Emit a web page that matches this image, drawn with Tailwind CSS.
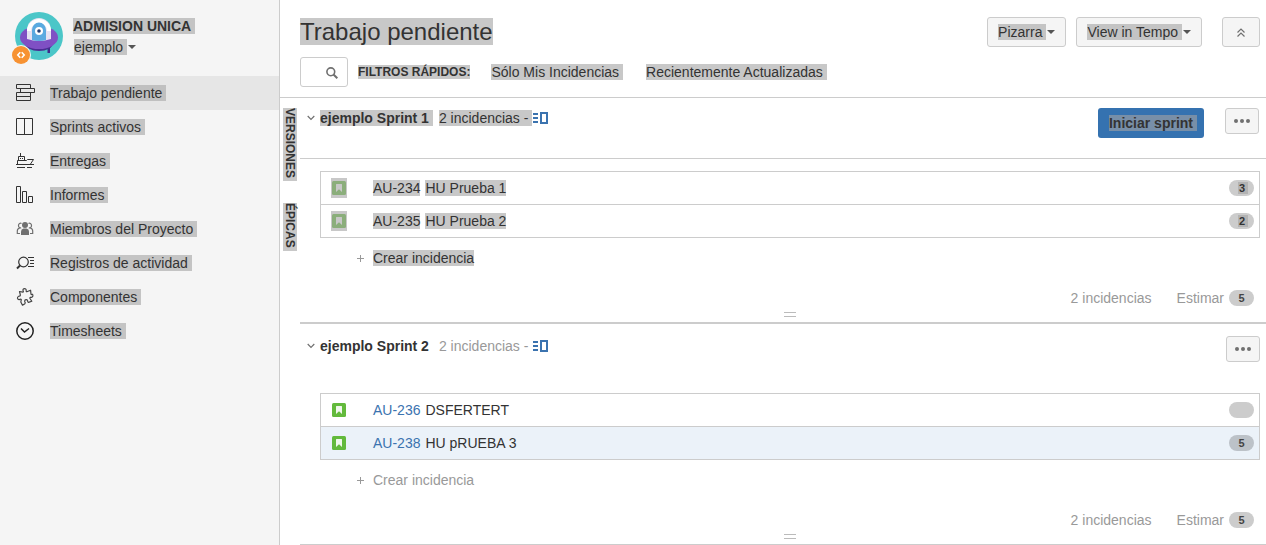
<!DOCTYPE html>
<html lang="es">

<head>
    <meta charset="UTF-8">
    <meta name="viewport" content="width=device-width, initial-scale=1.0">
    <title>Trabajo pendiente - ADMISION UNICA</title>
    <script src="https://cdn.jsdelivr.net/npm/@tailwindcss/browser@4"></script>
</head>

<body class="flex min-h-screen bg-white font-['Liberation_Sans',Arial,sans-serif] text-[14px] leading-4 text-[#333]">

    <!-- Shared icons -->
    <svg class="hidden">
        <symbol id="icon-caret" viewBox="0 0 8 4">
            <path d="M0 0h8L4 4z" fill="#555" />
        </symbol>
        <symbol id="icon-chevron" viewBox="0 0 8 6">
            <path d="M.7 1L4 4.3 7.3 1" fill="none" stroke="#707070" stroke-width="1.2" />
        </symbol>
        <symbol id="icon-panel" viewBox="0 0 15 12">
            <path d="M0 1h5v2H0zM0 5h5v2H0zM0 9h5v2H0z" fill="#3b73af" />
            <path d="M8 1h6v10H8z" fill="none" stroke="#3b73af" stroke-width="2" />
        </symbol>
        <symbol id="icon-dots" viewBox="0 0 16 4">
            <circle cx="2" cy="2" r="2" fill="#707070" />
            <circle cx="8" cy="2" r="2" fill="#707070" />
            <circle cx="14" cy="2" r="2" fill="#707070" />
        </symbol>
        <symbol id="icon-story" viewBox="0 0 14 14">
            <rect width="14" height="14" rx="1.5" fill="currentColor" />
            <path d="M4 3.500q0-.5.5-.5h5q.5 0 .5.500V11L7 8.200 4 11z" fill="#fff" fill-opacity=".9" />
        </symbol>
        <symbol id="icon-story-selected" viewBox="0 0 14 14">
            <rect width="14" height="14" rx="1.5" fill="#8bae7b" />
            <path d="M4 3.500q0-.5.5-.5h5q.5 0 .5.500V11L7 8.200 4 11z" fill="#c8c8c8" />
        </symbol>
        <symbol id="icon-plus" viewBox="0 0 7 7">
            <path d="M3.500 0v7M0 3.500h7" stroke="#999" fill="none" />
        </symbol>
    </svg>

    <aside class="w-[280px] shrink-0 border-r border-[#ccc] bg-[#f5f5f5]">
        <div class="flex h-[76px] pt-3 pl-[15px]">
            <div class="relative size-12 shrink-0">
                <svg class="size-12" viewBox="0 0 48 48">
                    <circle cx="24" cy="24" r="24" fill="#4bc6c8" />
                    <path d="M31 34h4v7h-2.500v-4H31z" fill="#3f2a8c" />
                    <ellipse cx="24" cy="31" rx="14" ry="8" fill="#4a2d93" />
                    <ellipse cx="24" cy="25.500" rx="19" ry="11.500" fill="#7f50c4" />
                    <path d="M12 27V18a12 12 0 0 1 24 0v9q-12 4-24 0z" fill="#e6e2f2" />
                    <path d="M12 19a12 12 0 0 1 24 0h-4a8 8 0 0 0-16 0z" fill="#fff" />
                    <path d="M17 28V18a7 7.500 0 0 1 14 0v10q-7 2-14 0z" fill="#5aaae0" />
                    <circle cx="24" cy="19" r="4" fill="#fff" />
                    <circle cx="24" cy="19" r="1.800" fill="#223f73" />
                </svg>
                <svg class="absolute top-[33px] -left-1 size-5" viewBox="0 0 20 20">
                    <circle cx="10" cy="10" r="10" fill="#f5f5f5" />
                    <circle cx="10" cy="10" r="9" fill="#f79232" />
                    <path d="M9.300 7.300L6.800 10 9.300 12.700M10.700 7.300L13.200 10 10.700 12.700" fill="none" stroke="#fff" stroke-width="1.600" />
                </svg>
            </div>
            <div class="pt-[6px] pl-[10px]">
                <div class="mb-[5px]"><a href="#" class="inline-block bg-[#c4c4c4] pr-1 font-bold">ADMISION UNICA</a></div>
                <button class="flex items-center gap-px pl-px"><span class="bg-[#c4c4c4] pr-1">ejemplo</span><svg class="h-1 w-2"><use href="#icon-caret" /></svg></button>
            </div>
        </div>

        <nav>
            <a href="#" class="flex h-[34px] items-center gap-[14px] bg-[#e6e6e6] pl-4">
                <svg class="size-5" viewBox="0 0 20 20" fill="none" stroke="#333">
                    <path d="M.5 1.500h14v4H.5zM4.500 5.500h14v4h-14zM.5 9.500h14v8H.5zM.5 13.500h14" />
                </svg>
                <span class="bg-[#c0c0c0] pr-1">Trabajo pendiente</span>
            </a>
            <a href="#" class="flex h-[34px] items-center gap-[14px] pl-4">
                <svg class="size-5" viewBox="0 0 20 20" fill="none" stroke="#333">
                    <path d="M.5 1.500h16v16H.5zM8.500 1.500v16" />
                </svg>
                <span class="bg-[#c4c4c4] pr-1">Sprints activos</span>
            </a>
            <a href="#" class="flex h-[34px] items-center gap-[14px] pl-4">
                <svg class="size-5" viewBox="0 0 20 20" fill="none" stroke="#333">
                    <path d="M4.500 2v3M2.500 9V5.500h6V9M1.500 13V9.500h9l1-1h6L14.500 13M0 13.500h18M1 16.500h8M11 16.500h5M4 7.500h1M6 7.500h1" />
                </svg>
                <span class="bg-[#c4c4c4] pr-1">Entregas</span>
            </a>
            <a href="#" class="flex h-[34px] items-center gap-[14px] pl-4">
                <svg class="size-5" viewBox="0 0 20 20" fill="none" stroke="#333">
                    <path d="M.5 1.500h4v16h-4zM6.500 6.500h4v11h-4zM12.500 11.500h4v6h-4z" />
                </svg>
                <span class="bg-[#c4c4c4] pr-1">Informes</span>
            </a>
            <a href="#" class="flex h-[34px] items-center gap-[14px] pl-4">
                <svg class="size-5" viewBox="0 0 20 20" fill="none" stroke="#707070">
                    <circle cx="9" cy="6" r="3" fill="#707070" stroke="none" />
                    <path d="M5 16v-3.500q0-2.500 2.500-3h3q2.500.5 2.500 3V16z" fill="#707070" stroke="none" />
                    <path d="M5.500 4.500a2 2.400 0 1 0-.3 4.300M12.500 4.500a2 2.400 0 1 1 .3 4.300M3.500 9.200Q1.300 9.700 1.300 12v2.500H4M14.500 9.200q2.200.5 2.200 2.800v2.500H14" stroke-width="1.200" />
                </svg>
                <span class="bg-[#c4c4c4] pr-1">Miembros del Proyecto</span>
            </a>
            <a href="#" class="flex h-[34px] items-center gap-[14px] pl-4">
                <svg class="size-5" viewBox="0 0 20 20" fill="none" stroke="#333">
                    <circle cx="7.500" cy="9" r="4.800" stroke-width="1.200" />
                    <path d="M4 12.500L1 15.500" stroke-width="2" />
                    <path d="M12 4.500h6M14 7.500h4M14 10.500h4M12 13.500h6" />
                </svg>
                <span class="bg-[#c4c4c4] pr-1">Registros de actividad</span>
            </a>
            <a href="#" class="flex h-[34px] items-center gap-[14px] pl-4">
                <svg class="size-5" viewBox="0 0 20 20" fill="none" stroke="#444" stroke-width="1.200">
                    <path d="M3.500 4.500L7 5.200Q7.800 4.500 7 3.500 6.800 1.700 8.500 1.700 10.300 1.700 10.200 3.400 9.800 4.500 10.800 4.800L14.600 3.200 15 7.200Q15.500 8 16.300 7.200 17.300 7.600 16.800 9.300 16.200 10.800 14.600 10.200 13.600 10.500 14 11.500L15.800 14.300 12.500 15.400Q11.400 15 11.700 14 11.500 12.500 10 12.700 8.400 13 8.700 14.600 9.700 15.800 8.900 16.700L6.500 18.200 4.800 15 5.300 12.600Q4.800 11.800 3.800 12.400 2.200 13 1.500 11.500 1.100 9.800 2.800 9.200 4.200 9.300 4.400 8.200z" stroke-linejoin="round" />
                </svg>
                <span class="bg-[#c4c4c4] pr-1">Componentes</span>
            </a>
            <a href="#" class="flex h-[34px] items-center gap-[14px] pl-4">
                <svg class="size-5" viewBox="0 0 20 20" fill="none" stroke="#222" stroke-width="1.500">
                    <circle cx="9" cy="10" r="8.200" />
                    <path d="M5 7.500L8.500 11 13 7.500" />
                </svg>
                <span class="bg-[#c4c4c4] pr-1">Timesheets</span>
            </a>
        </nav>
    </aside>

    <main class="min-w-0 flex-1">
        <header class="border-b border-[#ccc] pr-[6px] pb-[10px] pl-5">
            <div class="flex items-start justify-between">
                <h1 class="mt-[18px] bg-[#c8c8c8] text-[24px] leading-[27px]">Trabajo pendiente</h1>
                <div class="mt-[17px] flex gap-[10px]">
                    <button class="flex h-[30px] items-center gap-px rounded-[3px] border border-[#ccc] bg-[#f5f5f5] px-[10px]"><span class="bg-[#c4c4c4] pr-1">Pizarra</span><svg class="h-1 w-2"><use href="#icon-caret" /></svg></button>
                    <button class="flex h-[30px] items-center gap-px rounded-[3px] border border-[#ccc] bg-[#f5f5f5] px-[10px]"><span class="bg-[#c4c4c4] pr-1">View in Tempo</span><svg class="h-1 w-2"><use href="#icon-caret" /></svg></button>
                    <button class="ml-[10px] flex h-[30px] w-[38px] items-center justify-center rounded-[3px] border border-[#ccc] bg-[#f5f5f5]" aria-label="Contraer">
                        <svg class="h-[9px] w-2" viewBox="0 0 8 9" fill="none" stroke="#707070" stroke-width="1.200">
                            <path d="M.5 4.500L4 1l3.500 3.500M.5 8.500L4 5l3.500 3.500" />
                        </svg>
                    </button>
                </div>
            </div>
            <div class="mt-[10px] flex items-center">
                <label class="relative block">
                    <input type="text" aria-label="Buscar" class="block h-[30px] w-12 rounded-[3px] border border-[#ccc] bg-white pr-6 pl-1">
                    <svg class="absolute top-[10px] left-[26px] size-3" viewBox="0 0 12 12" fill="none" stroke="#707070">
                        <circle cx="4.800" cy="4.800" r="3.900" stroke-width="1.600" />
                        <path d="M7.500 7.500L11.300 11.300" stroke-width="2" />
                    </svg>
                </label>
                <span class="ml-[10px] bg-[#c8c8c8] text-[12px] leading-[14px] font-bold">FILTROS RÁPIDOS:</span>
                <a href="#" class="ml-[21px] bg-[#c8c8c8] pr-1">Sólo Mis Incidencias</a>
                <a href="#" class="ml-[23px] bg-[#c8c8c8] pr-1">Recientemente Actualizadas</a>
            </div>
        </header>

        <div class="flex">
            <div class="flex w-5 shrink-0 flex-col gap-[22px] pt-[10px] pl-[3px] text-[12px] leading-[14px] font-bold">
                <button class="w-[14px] bg-[#c8c8c8] pb-[3px] [writing-mode:vertical-rl]">VERSIONES</button>
                <button class="w-[14px] bg-[#c8c8c8] pb-[3px] [writing-mode:vertical-rl]">ÉPICAS</button>
            </div>

            <div class="min-w-0 flex-1">
                <!-- Sprint 1 -->
                <section class="border-b-2 border-[#ccc]">
                    <div class="flex items-start border-b border-[#ccc] pt-[10px] pr-[7px] pb-5 pl-[7px]">
                        <div class="mt-[2px] flex items-center">
                            <svg class="mr-[5px] h-[6px] w-2"><use href="#icon-chevron" /></svg>
                            <h2 class="bg-[#c8c8c8] pr-1 font-bold">ejemplo Sprint 1</h2>
                            <span class="ml-[6px] bg-[#c8c8c8] pr-1">2 incidencias -</span>
                            <svg class="ml-px h-3 w-[15px]"><use href="#icon-panel" /></svg>
                        </div>
                        <button class="ml-auto flex h-[30px] items-center rounded-[3px] bg-[#3572b0] pr-[7px] pl-[11px] font-bold"><span class="bg-[#788fa8] pr-1">Iniciar sprint</span></button>
                        <button class="ml-[21px] flex h-[26px] w-[34px] items-center justify-center rounded-[3px] border border-[#ccc] bg-[#f5f5f5]" aria-label="Más acciones"><svg class="h-1 w-4"><use href="#icon-dots" /></svg></button>
                    </div>

                    <ul class="mt-3 mr-[6px] ml-5 divide-y divide-[#ccc] border border-[#ccc]">
                        <li class="box-content flex h-8 items-center pr-[5px] pl-[10px]">
                            <span class="mr-[26px] flex h-5 w-4 items-center justify-center bg-[#c8c8c8]"><svg class="size-[14px]"><use href="#icon-story-selected" /></svg></span>
                            <a href="#" class="mr-[5px] bg-[#c8c8c8]">AU-234</a>
                            <span class="bg-[#c8c8c8]">HU Prueba 1</span>
                            <span class="ml-auto flex h-4 w-[25px] items-center rounded-full bg-[#ccc] pl-[9px] text-[11px] leading-3 font-bold"><span class="bg-[#b3b3b3] pr-[3px] pl-px">3</span></span>
                        </li>
                        <li class="box-content flex h-8 items-center pr-[5px] pl-[10px]">
                            <span class="mr-[26px] flex h-5 w-4 items-center justify-center bg-[#c8c8c8]"><svg class="size-[14px]"><use href="#icon-story-selected" /></svg></span>
                            <a href="#" class="mr-[5px] bg-[#c8c8c8]">AU-235</a>
                            <span class="bg-[#c8c8c8]">HU Prueba 2</span>
                            <span class="ml-auto flex h-4 w-[25px] items-center rounded-full bg-[#ccc] pl-[9px] text-[11px] leading-3 font-bold"><span class="bg-[#b3b3b3] pr-[3px] pl-px">2</span></span>
                        </li>
                    </ul>

                    <button class="mt-3 ml-[57px] flex items-center gap-[9px]">
                        <svg class="size-[7px]"><use href="#icon-plus" /></svg>
                        <span class="bg-[#c8c8c8]">Crear incidencia</span>
                    </button>

                    <div class="mt-6 mr-3 flex items-center justify-end text-[#999]">
                        <span class="mr-[25px]">2 incidencias</span>
                        <span class="mr-[5px]">Estimar</span>
                        <span class="flex h-4 w-[25px] items-center justify-center rounded-full bg-[#ccc] text-[11px] font-bold text-[#444]">5</span>
                    </div>
                    <div class="mt-[6px] mr-[6px] mb-[5px] ml-5 flex justify-center">
                        <div class="h-[5px] w-3 border-y border-[#bbb]"></div>
                    </div>
                </section>

                <!-- Sprint 2 -->
                <section class="border-b border-[#ccc]">
                    <div class="flex items-start pt-3 pr-[6px] pb-[19px] pl-[7px]">
                        <div class="mt-[2px] flex items-center">
                            <svg class="mr-[5px] h-[6px] w-2"><use href="#icon-chevron" /></svg>
                            <h2 class="pr-1 font-bold">ejemplo Sprint 2</h2>
                            <span class="ml-[6px] pr-1 text-[#999]">2 incidencias -</span>
                            <svg class="ml-px h-3 w-[15px]"><use href="#icon-panel" /></svg>
                        </div>
                        <button class="ml-auto flex h-[26px] w-[34px] items-center justify-center rounded-[3px] border border-[#ccc] bg-[#f5f5f5]" aria-label="Más acciones"><svg class="h-1 w-4"><use href="#icon-dots" /></svg></button>
                    </div>

                    <ul class="mt-3 mr-[6px] ml-5 divide-y divide-[#ccc] border border-[#ccc]">
                        <li class="box-content flex h-8 items-center pr-[5px] pl-[10px]">
                            <span class="mr-[26px] flex h-5 w-4 items-center justify-center text-[#63ba3c]"><svg class="size-[14px]"><use href="#icon-story" /></svg></span>
                            <a href="#" class="mr-[5px] text-[#3b73af]">AU-236</a>
                            <span>DSFERTERT</span>
                            <span class="ml-auto h-4 w-[25px] rounded-full bg-[#ccc]"></span>
                        </li>
                        <li class="box-content flex h-8 items-center bg-[#ebf2f9] pr-[5px] pl-[10px]">
                            <span class="mr-[26px] flex h-5 w-4 items-center justify-center text-[#63ba3c]"><svg class="size-[14px]"><use href="#icon-story" /></svg></span>
                            <a href="#" class="mr-[5px] text-[#3b73af]">AU-238</a>
                            <span>HU pRUEBA 3</span>
                            <span class="ml-auto flex h-4 w-[25px] items-center justify-center rounded-full bg-[#bcc2c8] text-[11px] font-bold text-[#444]">5</span>
                        </li>
                    </ul>

                    <button class="mt-3 ml-[57px] flex items-center gap-[9px] text-[#999]">
                        <svg class="size-[7px]"><use href="#icon-plus" /></svg>
                        <span>Crear incidencia</span>
                    </button>

                    <div class="mt-6 mr-3 flex items-center justify-end text-[#999]">
                        <span class="mr-[25px]">2 incidencias</span>
                        <span class="mr-[5px]">Estimar</span>
                        <span class="flex h-4 w-[25px] items-center justify-center rounded-full bg-[#ccc] text-[11px] font-bold text-[#444]">5</span>
                    </div>
                    <div class="mt-[6px] mr-[6px] mb-[5px] ml-5 flex justify-center">
                        <div class="h-[5px] w-3 border-y border-[#bbb]"></div>
                    </div>
                </section>
            </div>
        </div>
    </main>
</body>

</html>
